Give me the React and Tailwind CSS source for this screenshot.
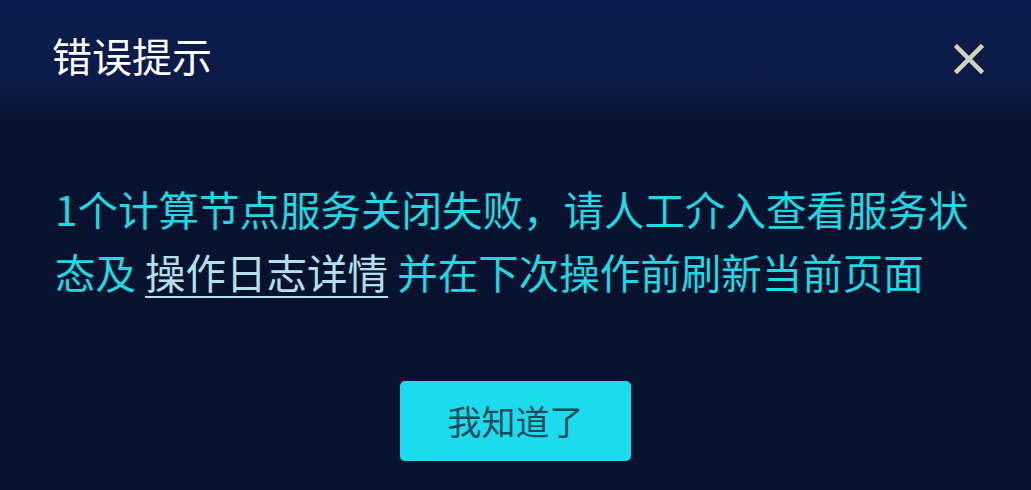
import React from 'react';

const CloseIcon = () => (
  <svg width="34" height="34" viewBox="0 0 34 34">
    <g strokeLinecap="square">
      <line x1="5" y1="5" x2="29" y2="29" stroke="#111827" strokeWidth="7.5" />
      <line x1="29" y1="5" x2="5" y2="29" stroke="#111827" strokeWidth="7.5" />
      <line x1="5" y1="5" x2="29" y2="29" stroke="#cfd2cf" strokeWidth="4.5" />
      <line x1="29" y1="5" x2="5" y2="29" stroke="#cfd2cf" strokeWidth="4.5" />
    </g>
  </svg>
);

const App = () => {
  return (
    <div
      className="w-full h-[490px] bg-[#07122e] flex flex-col overflow-hidden"
      style={{ fontFamily: '"Noto Sans CJK SC", "Noto Sans", sans-serif' }}
    >
      <div className="h-[120px] shrink-0 bg-gradient-to-b from-[#0b1d4c] via-[#0a1b48] via-70% to-[#071432] flex justify-between items-start pl-[52px] pr-[45px] pt-[24px]">
        <div className="text-[40px] leading-[63px] text-white">错误提示</div>
        <button className="mt-[18px] w-[34px] h-[34px] flex items-center justify-center">
          <CloseIcon />
        </button>
      </div>

      <div className="flex flex-col items-center">
        <div className="w-full pl-[55px] pt-[57px] text-[40.5px] leading-[63px] text-[#1ed8e2] whitespace-nowrap">
          1个计算节点服务关闭失败，请人工介入查看服务状
          <br />
          态及{' '}
          <a className="text-[#b4e0ec] underline decoration-2 underline-offset-[7px] cursor-pointer">
            操作日志详情
          </a>{' '}
          并在下次操作前刷新当前页面
        </div>

        <button className="mt-[78px] w-[231px] h-[80px] rounded-[5px] bg-[#1bdbec] text-[#1d4a5c] text-[34px] leading-none flex items-center justify-center">
          我知道了
        </button>
      </div>
    </div>
  );
};

export default App;
